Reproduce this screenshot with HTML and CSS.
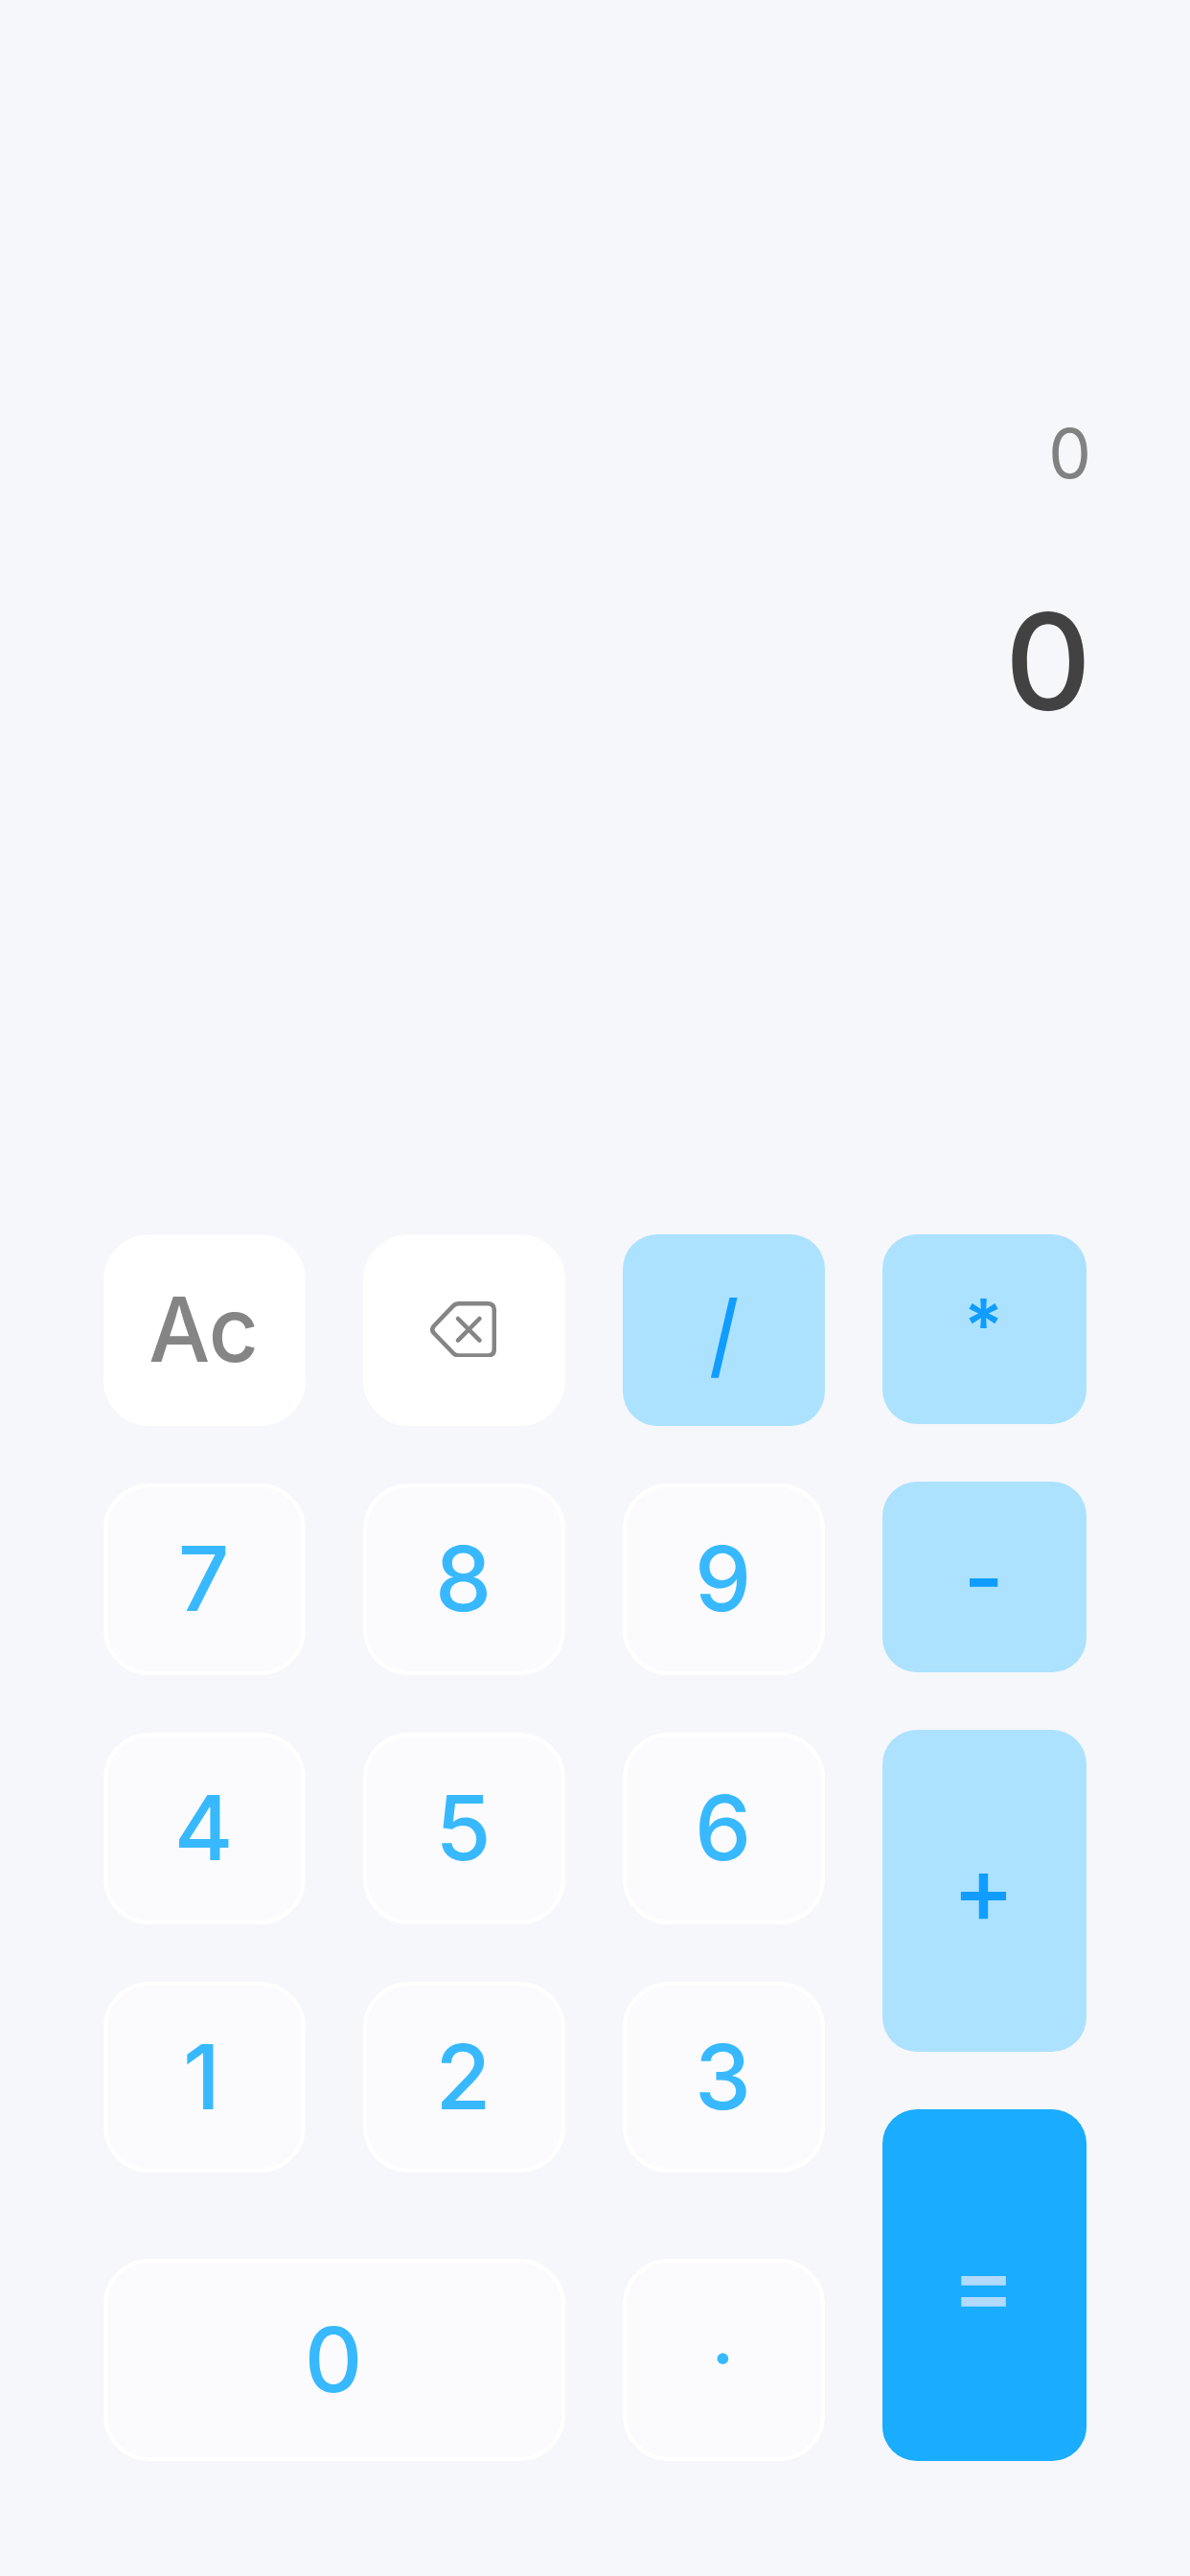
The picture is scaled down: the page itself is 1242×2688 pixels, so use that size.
FILE: index.html
```html
<!DOCTYPE html>
<html lang="en">
<head>
<meta charset="utf-8">
<title>Calculator</title>
<link rel="stylesheet" href="styles.css">
</head>
<body>
<main class="calculator">
  <section class="display">
    <div class="expression">0</div>
    <div class="result">0</div>
  </section>
  <section class="keypad">
    <div class="digits">
      <button class="key clear ac"><span>Ac</span></button>
      <button class="key clear" aria-label="Backspace">
        <svg class="backspace" viewBox="0 0 69 58.7">
          <path d="M30 2.25H60Q66.8 2.25 66.8 9V49.7Q66.8 56.4 60 56.4H30Q26.5 56.4 23.8 53.8L4 33.2Q.5 29.35 4 25.5L23.8 4.9Q26.5 2.25 30 2.25Z"/>
          <path d="M29 18 51.5 40.6M51.5 18 29 40.6"/>
        </svg>
      </button>
      <button class="key operator divide"><span>/</span></button>
      <button class="key"><span>7</span></button>
      <button class="key"><span>8</span></button>
      <button class="key"><span>9</span></button>
      <button class="key"><span>4</span></button>
      <button class="key"><span>5</span></button>
      <button class="key"><span>6</span></button>
      <button class="key one"><span>1</span></button>
      <button class="key"><span>2</span></button>
      <button class="key"><span>3</span></button>
      <button class="key zero"><span>0</span></button>
      <button class="key point"><span>·</span></button>
    </div>
    <div class="operators">
      <button class="key operator multiply"><span>*</span></button>
      <button class="key operator minus"><span>-</span></button>
      <button class="key operator plus"><span>+</span></button>
      <button class="key operator equals"><span>=</span></button>
    </div>
  </section>
</main>
</body>
</html>
```
FILE: styles.css
```css
* { box-sizing: border-box; }

body {
  margin: 0;
  background: #f6f7fb;
  font-family: Inter, sans-serif;
}

.calculator {
  height: 2688px;
  display: flex;
  flex-direction: column;
}

.display {
  height: 1288px;
  padding: 419px 103px 0;
  text-align: right;
}

.expression {
  font-size: 71px;
  line-height: 108px;
  color: #818181;
}

.result {
  margin-top: 55px;
  font-size: 140px;
  line-height: 216px;
  font-weight: 500;
  color: #424242;
}

.keypad {
  display: grid;
  grid-template-columns: 753px 213px;
  column-gap: 60px;
  padding: 0 108px;
}

.digits {
  display: grid;
  grid-template-columns: repeat(3, 211px);
  grid-template-rows: 200px 200px 200px 199px 241px;
  gap: 60px;
  align-content: start;
}

.digits .zero,
.digits .point { margin-top: 30px; }

.operators {
  display: grid;
  grid-template-rows: 198px 199px 336px 367px;
  row-gap: 60px;
}

.key {
  display: flex;
  justify-content: center;
  align-items: center;
  padding: 0 2px 2px 0;
  border: 4px solid #fff;
  border-radius: 48px;
  background: #fbfbfd;
  color: #38b9ff;
  font: 500 94px/1 Inter, sans-serif;
}

.clear { background: #fff; color: #858585; }
.ac span { letter-spacing: -1px; transform: scaleX(0.96); }
.zero { grid-column: span 2; }
.one { padding-right: 6px; }
.point { font-size: 80px; padding-bottom: 5px; }

.operator {
  border: 0;
  border-radius: 36px;
  background: #ade2ff;
  color: #109dff;
}

.divide { font-size: 96px; padding: 8px 0 0; }
.divide span { transform: scaleX(0.87); }
.multiply { font-size: 76px; font-weight: 600; padding-bottom: 10px; }
.minus { padding: 1px 2px 0 0; }
.minus span { transform: scaleX(0.96); }
.plus { font-size: 98px; }
.equals { font-size: 102px; padding-bottom: 3px; background: #19acff; color: #b2daff; }

.backspace {
  width: 69px;
  height: 58.7px;
  fill: none;
  stroke: #858585;
  stroke-width: 4.5;
  stroke-linecap: round;
  stroke-linejoin: round;
}
```
